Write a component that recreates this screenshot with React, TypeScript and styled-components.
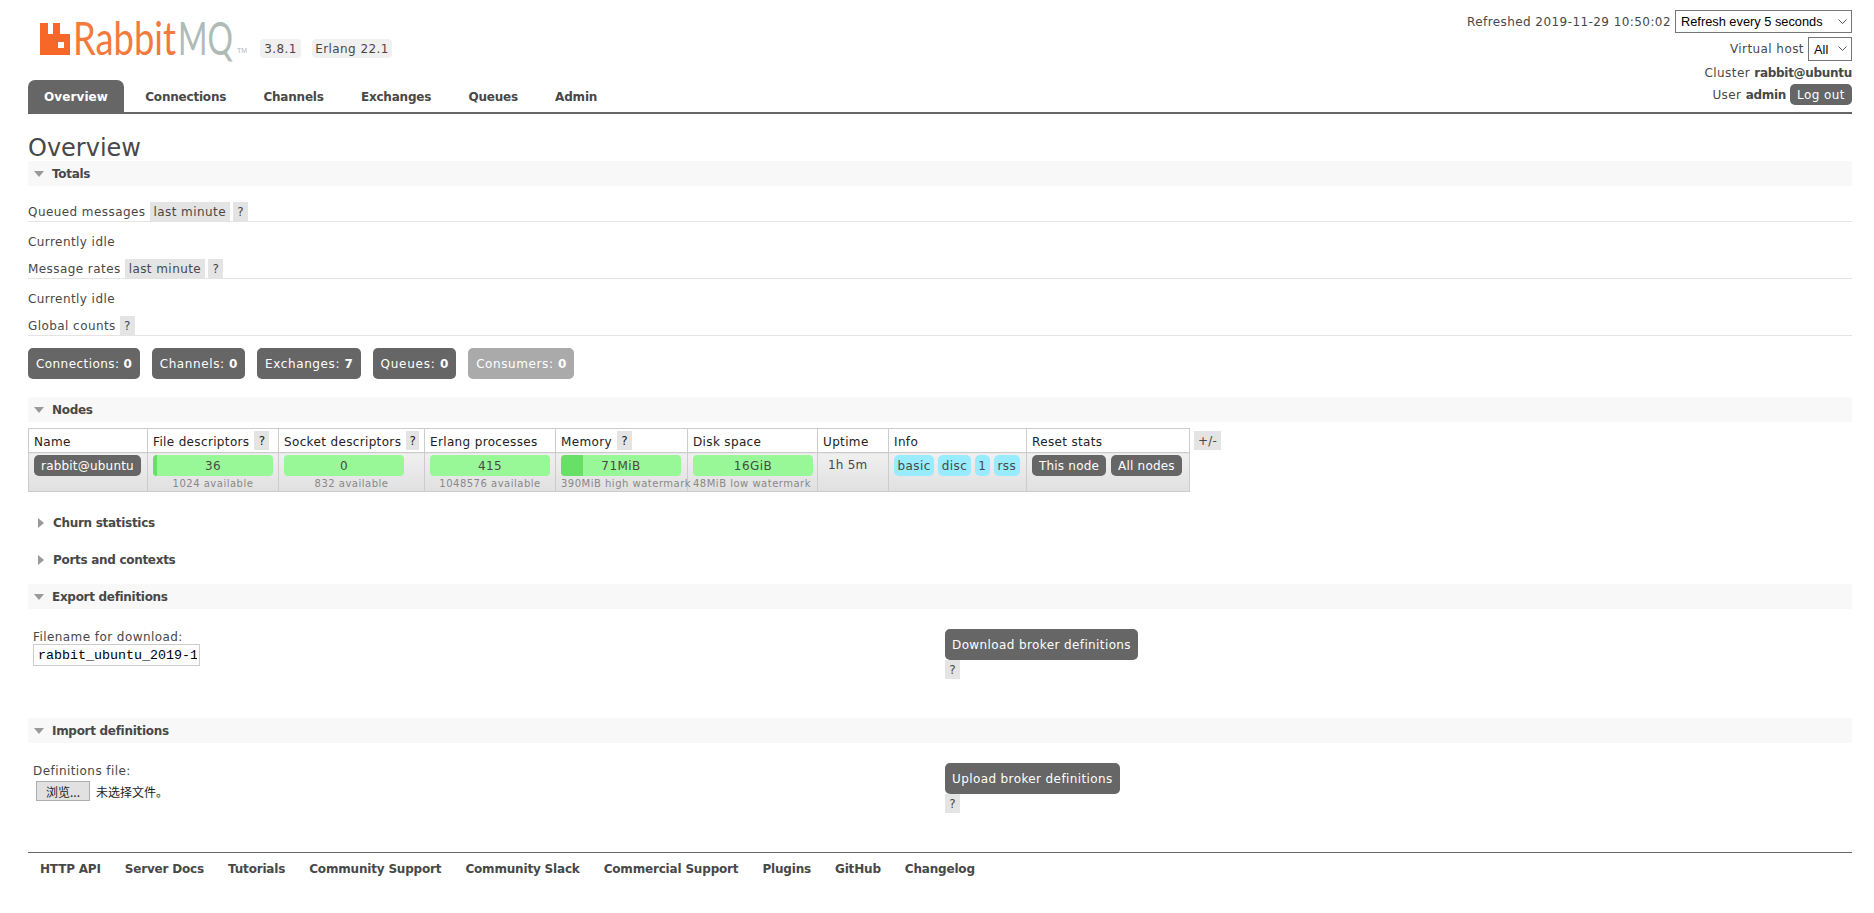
import React from "react";
import styled, { createGlobalStyle } from "styled-components";

const Global = createGlobalStyle`
  html, body { margin: 0; padding: 0; background: #fff; }
  body { font-family: "DejaVu Sans", Verdana, sans-serif; font-size: 12px; color: #484848; letter-spacing: 0.43px; }
  b, h2 { letter-spacing: -0.3px; }
  footer { letter-spacing: -0.18px; }
`;

const Page = styled.div`
  padding: 0 22px 0 28px;
  height: 913px;
  box-sizing: border-box;
  overflow: hidden;
`;

const Header = styled.header`
  display: flex;
  justify-content: space-between;
  height: 112px;
  border-bottom: 2px solid #666;
  box-sizing: content-box;
`;
const HeaderLeft = styled.div`
  display: flex;
  flex-direction: column;
`;
const LogoRow = styled.div`
  display: flex;
  align-items: flex-start;
  height: 80px;
  padding: 23px 0 0 12px;
  box-sizing: border-box;
`;
const LogoMark = styled.svg`
  width: 30px;
  height: 32px;
  flex: none;
`;
const LogoWords = styled.div`
  position: relative;
  width: 168px;
  height: 40px;
  margin: -8px 0 0 6px;
  flex: none;
`;
const LogoText = styled.span<{ $x: number; $c: string; $sx: number }>`
  position: absolute;
  left: ${(p) => p.$x}px;
  top: 0;
  font-family: "Lato", "Liberation Sans", sans-serif;
  font-weight: 400;
  font-size: 46px;
  line-height: 46px;
  letter-spacing: 0;
  color: ${(p) => p.$c};
  transform: scaleX(${(p) => p.$sx});
  transform-origin: left center;
  white-space: nowrap;
`;
const LogoTm = styled.span`
  position: absolute;
  left: 161px;
  top: 32px;
  font-family: "Liberation Sans", Arial, sans-serif;
  font-size: 7px;
  letter-spacing: 0;
  color: #aebbb6;
`;
const VersionBadge = styled.span<{ $ml: number; $w: number }>`
  display: flex;
  align-items: center;
  justify-content: center;
  width: ${(p) => p.$w}px;
  height: 19px;
  margin: 16px 0 0 ${(p) => p.$ml}px;
  background: #f0f0f0;
  border-radius: 4px;
  font-size: 12px;
  flex: none;
`;
const Tabs = styled.nav`
  display: flex;
  height: 32px;
`;
const Tab = styled.a<{ $active?: boolean }>`
  display: flex;
  align-items: center;
  height: 32px;
  padding: 1px 16px 0;
  box-sizing: border-box;
  margin-right: 5.2px;
  border-radius: 7px 7px 0 0;
  font-weight: bold;
  font-size: 12px;
  letter-spacing: ${(p) => (p.$active ? "0.1px" : "-0.2px")};
  color: ${(p) => (p.$active ? "#fff" : "#484848")};
  background: ${(p) => (p.$active ? "#666" : "transparent")};
`;
const HeaderRight = styled.div`
  display: flex;
  flex-direction: column;
  align-items: flex-end;
  padding-top: 10px;
`;
const StatusRow = styled.div<{ $h: number; $mt?: number }>`
  display: flex;
  align-items: center;
  justify-content: flex-end;
  gap: 4px;
  height: ${(p) => p.$h}px;
  margin-top: ${(p) => p.$mt ?? 0}px;
  white-space: pre;
`;
const SelectBox = styled.div<{ $w: number }>`
  position: relative;
  width: ${(p) => p.$w}px;
  height: 100%;
`;
const NativeSelect = styled.select`
  display: block;
  width: 100%;
  height: 100%;
  appearance: none;
  font-family: "Liberation Sans", Arial, sans-serif;
  font-size: 12.8px;
  letter-spacing: 0;
  color: #000;
  background: #fff;
  border: 1px solid #767676;
  border-radius: 0;
  padding: 0 0 0 5px;
`;
const Chevron = styled.svg`
  position: absolute;
  right: 5px;
  top: 50%;
  width: 9px;
  height: 5px;
  margin-top: -3px;
  pointer-events: none;
`;
const DarkButton = styled.button<{ $tone?: string; $h?: number }>`
  display: inline-flex;
  align-items: center;
  justify-content: center;
  height: ${(p) => p.$h ?? 21}px;
  padding: 0 7px;
  border: 0;
  border-radius: 5px;
  background: ${(p) => p.$tone ?? "#666"};
  color: #fff;
  font-family: inherit;
  font-size: 12px;
  letter-spacing: inherit;
  white-space: nowrap;
`;
const CountButton = styled(DarkButton)<{ $ls?: number }>`
  padding: 0 8px;
  letter-spacing: ${(p) => p.$ls ?? 0.6}px;
`;
const TableButton = styled(DarkButton)`
  letter-spacing: 0.2px;
`;
const LargeButton = styled(DarkButton)`
  letter-spacing: 0.39px;
`;

const Title = styled.h1`
  margin: 0;
  height: 47px;
  font-size: 24px;
  font-weight: normal;
  letter-spacing: 0;
  line-height: 25px;
  padding-top: 5px;
  box-sizing: border-box;
  display: flex;
  align-items: flex-end;
`;
const SectionBar = styled.h2<{ $open: boolean }>`
  display: flex;
  align-items: center;
  height: 25px;
  margin: 0;
  font-size: 12px;
  font-weight: bold;
  background: ${(p) => (p.$open ? "#f8f8f8" : "transparent")};
`;
const Tri = styled.span<{ $open: boolean }>`
  flex: none;
  width: 0;
  height: 0;
  ${(p) =>
    p.$open
      ? `margin: 0 8px 0 6px;
         border-left: 5.5px solid transparent;
         border-right: 5.5px solid transparent;
         border-top: 6px solid #999;`
      : `margin: 0 9px 0 10px;
         border-top: 5.5px solid transparent;
         border-bottom: 5.5px solid transparent;
         border-left: 6px solid #999;`}
`;
const TotalsBody = styled.div`
  padding-top: 16px;
`;
const LabelRow = styled.div`
  display: flex;
  align-items: center;
  height: 19px;
  border-bottom: 1px solid #e4e4e4;
  gap: 4px;
`;
const Chip = styled.span`
  display: inline-flex;
  align-items: center;
  justify-content: center;
  height: 19px;
  padding: 0 4px;
  background: #e4e4e4;
  font-size: 12px;
  white-space: nowrap;
`;
const HelpChip = styled(Chip)`
  width: 15px;
  padding: 0;
  letter-spacing: 0;
  box-sizing: border-box;
`;
const TightHelp = styled(HelpChip)`
  margin-left: -1px;
`;
const ToggleChip = styled(Chip)`
  margin-top: 3px;
  letter-spacing: 0.2px;
`;
const IdleText = styled.div`
  height: 19px;
  line-height: 19px;
  margin: 11px 0 7px;
`;
const CountRow = styled.div`
  display: flex;
  gap: 12px;
  margin: 12px 0 18px;
`;
const Strong = styled.b`
  font-weight: bold;
`;

const NodeBlock = styled.div`
  display: flex;
  align-items: flex-start;
  gap: 4px;
  margin: 6px 0 18px;
`;
const NodeTable = styled.table`
  border-collapse: collapse;
  table-layout: fixed;
  width: 1161px;
  height: 64px;
  border: 1px solid #ccc;
  th, td { border: 1px solid #ccc; }
`;
const Th = styled.th<{ $w: number }>`
  width: ${(p) => p.$w}px;
  height: 24px;
  padding: 2px 5px 0;
  box-sizing: border-box;
  text-align: left;
  font-weight: normal;
  letter-spacing: 0.35px;
  color: #222;
  background: #fff;
  white-space: nowrap;
`;
const ThInner = styled.span`
  display: flex;
  align-items: center;
  gap: 5px;
  margin-top: -2px;
`;
const ThLabel = styled.span`
  position: relative;
  top: 1px;
`;
const Td = styled.td`
  padding: 2px 5px 0;
  vertical-align: top;
  background: linear-gradient(#f0f0f0, #e0e0e0);
  white-space: nowrap;
  overflow: visible;
`;
const Bar = styled.div`
  position: relative;
  width: 120px;
  height: 21px;
  border-radius: 4px;
  background: #98f898;
  overflow: hidden;
  text-align: center;
  line-height: 22px;
  color: #484848;
`;
const BarFill = styled.div`
  position: absolute;
  left: 0;
  top: 0;
  bottom: 0;
  background: #68e068;
`;
const BarLabel = styled.span`
  position: relative;
`;
const Sub = styled.div`
  font-size: 10px;
  line-height: 12px;
  margin-top: 2px;
  color: #888;
  text-align: center;
  letter-spacing: 0.5px;
`;
const SubLeft = styled(Sub)`
  text-align: left;
  width: 120px;
`;
const Uptime = styled.div`
  padding-left: 5px;
  line-height: 21px;
  letter-spacing: 0.2px;
`;
const InfoRow = styled.div`
  display: flex;
  gap: 4px;
`;
const InfoBadge = styled.span`
  display: flex;
  align-items: center;
  height: 21px;
  padding: 0 3.5px;
  border-radius: 5px;
  background: #99ebff;
`;
const ButtonRow = styled.div`
  display: flex;
  gap: 5px;
`;
const Gap = styled.div`
  height: 12px;
`;
const FormGrid = styled.div`
  display: grid;
  grid-template-columns: 912px 1fr;
  height: 109px;
  padding: 20px 0 0 5px;
  box-sizing: border-box;
`;
const FormLabel = styled.div`
  height: 15px;
  line-height: 17px;
`;
const NameInput = styled.input`
  display: block;
  width: 167px;
  height: 22px;
  box-sizing: border-box;
  border: 1px solid #ccc;
  padding: 1px 2px 1px 4px;
  font-family: "Liberation Mono", "Courier New", monospace;
  font-size: 13.33px;
  letter-spacing: 0;
  color: #000;
  background: #fff;
`;
const FileRow = styled.div`
  display: flex;
  align-items: center;
  gap: 6px;
  margin: 3px 0 0 3px;
`;
const BrowseButton = styled.button`
  width: 54px;
  height: 20px;
  padding: 0;
  border: 1px solid #adadad;
  background: #e1e1e1;
  font-family: "Noto Sans CJK SC", "DejaVu Sans", sans-serif;
  font-size: 12px;
  color: #222;
`;
const FileNote = styled.span`
  font-family: "Noto Sans CJK SC", sans-serif;
  font-size: 12px;
  letter-spacing: 0;
  color: #222;
`;
const ActionCol = styled.div`
  display: flex;
  flex-direction: column;
  align-items: flex-start;
`;
const Footer = styled.footer`
  display: flex;
  align-items: center;
  height: 31px;
  border-top: 1px solid #666;
  padding-left: 12px;
  gap: 24px;
  font-weight: bold;
  font-size: 12px;
`;

const Section = ({ title, open, children }: { title: string; open: boolean; children?: React.ReactNode }) => (
  <>
    <SectionBar $open={open}>
      <Tri $open={open} />
      {title}
    </SectionBar>
    {children}
  </>
);

const Select = ({ w, label }: { w: number; label: string }) => (
  <SelectBox $w={w}>
    <NativeSelect>
      <option>{label}</option>
    </NativeSelect>
    <Chevron viewBox="0 0 9 5">
      <path d="M0.5 0.5L4.5 4.5L8.5 0.5" fill="none" stroke="#555" strokeWidth="1" />
    </Chevron>
  </SelectBox>
);

const App = () => (
  <Page>
    <Global />
    <Header>
      <HeaderLeft>
        <LogoRow>
          <LogoMark viewBox="0 0 30 32">
            <path fillRule="evenodd" fill="#f76727" d="M0 0H8V11H13V0H20V11H30V32H0ZM18 19V25H24V19Z" />
          </LogoMark>
          <LogoWords>
            <LogoText $x={-3} $sx={0.79} $c="#f37a3c">Rabbit</LogoText>
            <LogoText $x={102} $sx={0.69} $c="#aebbb6">MQ</LogoText>
            <LogoTm>TM</LogoTm>
          </LogoWords>
          <VersionBadge $ml={16} $w={41}>3.8.1</VersionBadge>
          <VersionBadge $ml={11} $w={80}>Erlang 22.1</VersionBadge>
        </LogoRow>
        <Tabs>
          <Tab $active>Overview</Tab>
          <Tab>Connections</Tab>
          <Tab>Channels</Tab>
          <Tab>Exchanges</Tab>
          <Tab>Queues</Tab>
          <Tab>Admin</Tab>
        </Tabs>
      </HeaderLeft>
      <HeaderRight>
        <StatusRow $h={23}>
          Refreshed 2019-11-29 10:50:02
          <Select w={177} label="Refresh every 5 seconds" />
        </StatusRow>
        <StatusRow $h={24} $mt={4}>
          Virtual host
          <Select w={44} label="All" />
        </StatusRow>
        <StatusRow $h={23}>
          <span>
            Cluster <Strong>rabbit@ubuntu</Strong>
          </span>
        </StatusRow>
        <StatusRow $h={21}>
          <span>
            User <Strong>admin</Strong>
          </span>
          <DarkButton>Log out</DarkButton>
        </StatusRow>
      </HeaderRight>
    </Header>

    <main>
      <Title>Overview</Title>
      <Section title="Totals" open>
        <TotalsBody>
          <LabelRow>
            Queued messages <Chip>last minute</Chip> <TightHelp>?</TightHelp>
          </LabelRow>
          <IdleText>Currently idle</IdleText>
          <LabelRow>
            Message rates <Chip>last minute</Chip> <TightHelp>?</TightHelp>
          </LabelRow>
          <IdleText>Currently idle</IdleText>
          <LabelRow>Global counts <HelpChip>?</HelpChip></LabelRow>
          <CountRow>
            <CountButton $h={31} $ls={0.43}>Connections:&nbsp;<Strong>0</Strong></CountButton>
            <CountButton $h={31}>Channels:&nbsp;<Strong>0</Strong></CountButton>
            <CountButton $h={31}>Exchanges:&nbsp;<Strong>7</Strong></CountButton>
            <CountButton $h={31} $ls={0.75}>Queues:&nbsp;<Strong>0</Strong></CountButton>
            <CountButton $h={31}  $tone="#aaa">Consumers:&nbsp;<Strong>0</Strong></CountButton>
          </CountRow>
        </TotalsBody>
      </Section>

      <Section title="Nodes" open>
        <NodeBlock>
          <NodeTable>
            <thead>
              <tr>
                <Th $w={119}>Name</Th>
                <Th $w={131}><ThInner><ThLabel>File descriptors</ThLabel> <HelpChip>?</HelpChip></ThInner></Th>
                <Th $w={146}><ThInner><ThLabel>Socket descriptors</ThLabel> <HelpChip>?</HelpChip></ThInner></Th>
                <Th $w={131}>Erlang processes</Th>
                <Th $w={132}><ThInner><ThLabel>Memory</ThLabel> <HelpChip>?</HelpChip></ThInner></Th>
                <Th $w={130}>Disk space</Th>
                <Th $w={71}>Uptime</Th>
                <Th $w={138}>Info</Th>
                <Th $w={163}>Reset stats</Th>
              </tr>
            </thead>
            <tbody>
              <tr>
                <Td><TableButton>rabbit@ubuntu</TableButton></Td>
                <Td>
                  <Bar><BarFill style={{ width: "3%" }} /><BarLabel>36</BarLabel></Bar>
                  <Sub>1024 available</Sub>
                </Td>
                <Td>
                  <Bar><BarLabel>0</BarLabel></Bar>
                  <Sub>832 available</Sub>
                </Td>
                <Td>
                  <Bar><BarLabel>415</BarLabel></Bar>
                  <Sub>1048576 available</Sub>
                </Td>
                <Td>
                  <Bar><BarFill style={{ width: "18%" }} /><BarLabel>71MiB</BarLabel></Bar>
                  <SubLeft>390MiB high watermark</SubLeft>
                </Td>
                <Td>
                  <Bar><BarLabel>16GiB</BarLabel></Bar>
                  <SubLeft>48MiB low watermark</SubLeft>
                </Td>
                <Td><Uptime>1h 5m</Uptime></Td>
                <Td>
                  <InfoRow>
                    <InfoBadge>basic</InfoBadge>
                    <InfoBadge>disc</InfoBadge>
                    <InfoBadge>1</InfoBadge>
                    <InfoBadge>rss</InfoBadge>
                  </InfoRow>
                </Td>
                <Td>
                  <ButtonRow>
                    <TableButton>This node</TableButton>
                    <TableButton>All nodes</TableButton>
                  </ButtonRow>
                </Td>
              </tr>
            </tbody>
          </NodeTable>
          <ToggleChip>+/-</ToggleChip>
        </NodeBlock>
      </Section>

      <Section title="Churn statistics" open={false} />
      <Gap />
      <Section title="Ports and contexts" open={false} />
      <Gap />
      <Section title="Export definitions" open>
        <FormGrid>
          <div>
            <FormLabel>Filename for download:</FormLabel>
            <NameInput readOnly defaultValue="rabbit_ubuntu_2019-11-29.json" />
          </div>
          <ActionCol>
            <LargeButton $h={31}>Download broker definitions</LargeButton>
            <HelpChip>?</HelpChip>
          </ActionCol>
        </FormGrid>
      </Section>
      <Section title="Import definitions" open>
        <FormGrid>
          <div>
            <FormLabel>Definitions file:</FormLabel>
            <FileRow>
              <BrowseButton>浏览...</BrowseButton>
              <FileNote>未选择文件。</FileNote>
            </FileRow>
          </div>
          <ActionCol>
            <LargeButton $h={31}>Upload broker definitions</LargeButton>
            <HelpChip>?</HelpChip>
          </ActionCol>
        </FormGrid>
      </Section>
      <Footer>
        <span>HTTP API</span>
        <span>Server Docs</span>
        <span>Tutorials</span>
        <span>Community Support</span>
        <span>Community Slack</span>
        <span>Commercial Support</span>
        <span>Plugins</span>
        <span>GitHub</span>
        <span>Changelog</span>
      </Footer>
    </main>
  </Page>
);

export default App;
